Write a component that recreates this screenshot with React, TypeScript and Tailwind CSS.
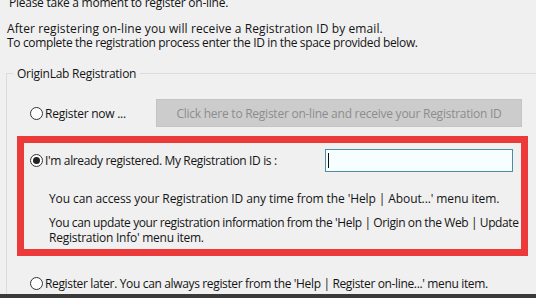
import React from "react";

const Radio = ({ checked }: { checked?: boolean }) => (
  <span className="flex h-[13px] w-[13px] shrink-0 items-center justify-center rounded-full border border-[#333333] bg-white">
    {checked ? <span className="h-[7px] w-[7px] rounded-full bg-[#222222]" /> : null}
  </span>
);

export default function App() {
  return (
    <div
      className="relative flex h-[298px] w-[536px] flex-col overflow-hidden bg-[#f0f0f0] text-[12px] tracking-[-0.25px] text-[#141414]"
      style={{ fontFamily: '"Open Sans", "Noto Sans", sans-serif' }}
    >
      <div className="mt-[-5px] whitespace-nowrap pl-[9px] leading-[15px]">Please take a moment to register on-line.</div>
      <div className="mt-[12px] whitespace-nowrap pl-[7px] leading-[14px]">
        <div className="tracking-[0.1px]">After registering on-line you will receive a Registration ID by email.</div>
        <div className="tracking-[-0.35px]">To complete the registration process enter the ID in the space provided below.</div>
      </div>

      <div className="relative ml-[6px] mt-[23px] w-[540px] flex-1 border-l border-t border-[#dcdcdc]">
        <div className="absolute left-[6px] top-[-8px] bg-[#f0f0f0] px-[4px] leading-[15px]">OriginLab Registration</div>

        <div className="mt-[25px] flex h-[28px] items-center">
          <div className="ml-[23px] flex w-[126px] items-center gap-[2px]">
            <Radio />
            <span className="whitespace-nowrap leading-[15px]">Register now ...</span>
          </div>
          <div className="flex h-[28px] w-[366px] items-center justify-center whitespace-nowrap border border-[#c4c4c4] bg-[#cccccc] leading-[15px] text-[#8c8c8c]">
            Click here to Register on-line and receive your Registration ID
          </div>
        </div>

        <div className="ml-[10px] mt-[9px] h-[120px] w-[511px] border-[7px] border-[#ec3a3a]">
          <div className="mt-[6px] flex h-[23px] items-center">
            <div className="ml-[6px] flex w-[295px] items-center gap-[2px]">
              <Radio checked />
              <span className="whitespace-nowrap leading-[15px] tracking-[-0.35px]">I'm already registered. My Registration ID is :</span>
            </div>
            <div className="flex h-[23px] w-[188px] items-center border border-[#4a8ea2] bg-[#f6feff] pl-[2px]">
              <span className="h-[15px] w-[1px] bg-[#111111]" />
            </div>
          </div>
          <div className="ml-[25px] mt-[19px] whitespace-nowrap leading-[15px] tracking-[-0.1px]">
            You can access your Registration ID any time from the 'Help | About...' menu item.
          </div>
          <div className="ml-[25px] mt-[9px] whitespace-nowrap leading-[15px]">
            <div className="tracking-[-0.4px]">You can update your registration information from the 'Help | Origin on the Web | Update</div>
            <div>Registration Info' menu item.</div>
          </div>
        </div>

        <div className="ml-[23px] mt-[20px] flex items-center gap-[2px]">
          <Radio />
          <span className="whitespace-nowrap leading-[15px] tracking-[-0.35px]">
            Register later. You can always register from the 'Help | Register on-line...' menu item.
          </span>
        </div>
      </div>

      <div className="h-[4px] w-full shrink-0 bg-[#3a3a3a]" />
    </div>
  );
}
